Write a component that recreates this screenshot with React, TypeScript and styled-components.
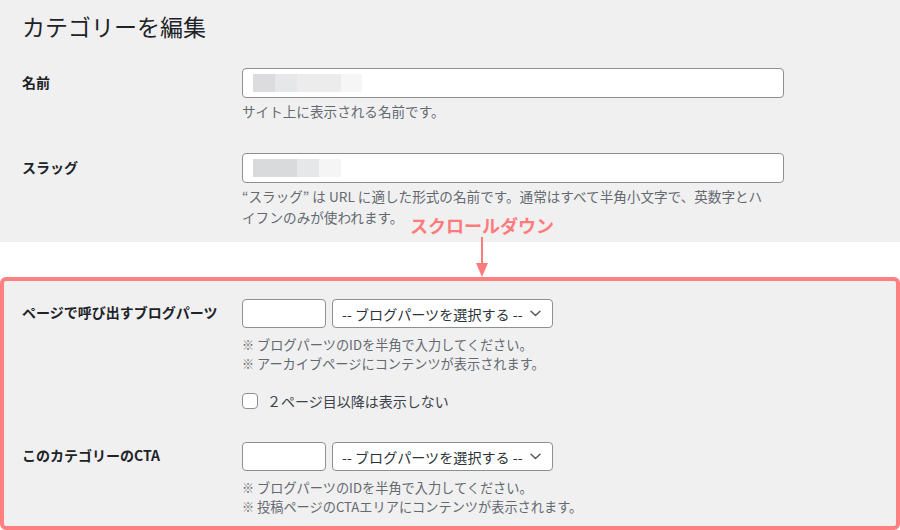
import React from "react";
import styled, { createGlobalStyle } from "styled-components";

const GlobalStyle = createGlobalStyle`
  html, body { margin: 0; padding: 0; background: #ffffff; }
  body {
    font-family: "Noto Sans CJK JP", "Noto Sans", sans-serif;
    color: #1d2327;
    -webkit-font-smoothing: antialiased;
  }
  * { box-sizing: border-box; }
`;

const Page = styled.div`
  position: relative;
  width: 900px;
  height: 530px;
  overflow: hidden;
  background: #ffffff;
`;

const TopSection = styled.section`
  background: #f0f0f1;
  height: 242px;
  padding: 11px 0 0 22px;
`;

const Title = styled.h1`
  margin: 0 0 27px;
  font-size: 23px;
  font-weight: 400;
  line-height: 30px;
  color: #1d2327;
`;

const Row = styled.div<{ $gap?: number }>`
  display: flex;
  align-items: flex-start;
  margin-bottom: ${(p) => p.$gap ?? 0}px;
`;

const Label = styled.div<{ $top?: number }>`
  width: 220px;
  flex: none;
  padding-top: ${(p) => p.$top ?? 4}px;
  font-size: 14px;
  font-weight: 700;
  line-height: 20px;
  color: #1d2327;
`;

const Field = styled.div`
  display: flex;
  flex-direction: column;
`;

const TextInput = styled.div`
  width: 542px;
  height: 30px;
  border: 1px solid #8c8f94;
  border-radius: 4px;
  background: #ffffff;
  display: flex;
  align-items: center;
  padding-left: 10px;
`;

const Blur = styled.span<{ $w: number; $c: string }>`
  display: inline-block;
  width: ${(p) => p.$w}px;
  height: 18px;
  background: ${(p) => p.$c};
`;

const Description = styled.p`
  margin: 3px 0 0;
  width: 560px;
  font-size: 13.6px;
  line-height: 21px;
  color: #646970;
  white-space: nowrap;
`;

const Annotation = styled.div`
  position: absolute;
  left: 410px;
  top: 214px;
  display: flex;
  flex-direction: column;
  align-items: center;
  width: 144px;
`;

const AnnotationText = styled.span`
  font-size: 18px;
  font-weight: 700;
  line-height: 23px;
  color: #ff7b7b;
  white-space: nowrap;
`;

const ArrowBox = styled.svg`
  display: block;
  margin-left: -1px;
`;

const WhiteGap = styled.div`
  height: 35px;
`;

const Highlight = styled.section`
  height: 253px;
  border: 4px solid #ff8080;
  border-radius: 6px;
  background: #f0f0f1;
  padding: 18px 0 0 18px;
`;

const Controls = styled.div`
  display: flex;
  gap: 6px;
  align-items: flex-start;
`;

const SmallInput = styled.div`
  width: 84px;
  height: 29px;
  border: 1px solid #8c8f94;
  border-radius: 4px;
  background: #ffffff;
`;

const Select = styled.div`
  width: 221px;
  height: 29px;
  border: 1px solid #8c8f94;
  border-radius: 4px;
  background: #ffffff;
  display: flex;
  align-items: center;
  justify-content: space-between;
  padding: 0 11px 0 9px;
  font-size: 14.1px;
  color: #2c3338;
  white-space: nowrap;
`;

const Notes = styled.div<{ $top: number }>`
  margin-top: ${(p) => p.$top}px;
  font-size: 13.2px;
  line-height: 19px;
  color: #646970;
`;

const Note = styled.div`
  white-space: nowrap;
`;

const Mark = styled.span`
  font-size: 12px;
  margin-right: 3px;
`;

const CheckRow = styled.label`
  display: flex;
  align-items: center;
  gap: 9px;
  margin-top: 19px;
  font-size: 14px;
  line-height: 18px;
  color: #3c434a;
`;

const CheckBox = styled.span`
  width: 16px;
  height: 16px;
  border: 1px solid #8c8f94;
  border-radius: 4px;
  background: #ffffff;
  flex: none;
`;

const Chevron = () => (
  <svg width="11" height="7" viewBox="0 0 11 7" fill="none">
    <path d="M1 1.2 L5.5 5.6 L10 1.2" stroke="#50575e" strokeWidth="1.4" strokeLinecap="round" strokeLinejoin="round" />
  </svg>
);

const PartsPicker = () => (
  <Controls>
    <SmallInput />
    <Select>
      <span>-- ブログパーツを選択する --</span>
      <Chevron />
    </Select>
  </Controls>
);

export default function App() {
  return (
    <Page>
      <GlobalStyle />
      <TopSection>
        <Title>カテゴリーを編集</Title>
        <Row $gap={31}>
          <Label>名前</Label>
          <Field>
            <TextInput>
              <Blur $w={22} $c="#dcdcde" />
              <Blur $w={22} $c="#e6e7e8" />
              <Blur $w={44} $c="#ececec" />
              <Blur $w={21} $c="#f6f6f6" />
            </TextInput>
            <Description>サイト上に表示される名前です。</Description>
          </Field>
        </Row>
        <Row>
          <Label>スラッグ</Label>
          <Field>
            <TextInput>
              <Blur $w={44} $c="#d9dadc" />
              <Blur $w={22} $c="#e6e7e8" />
              <Blur $w={22} $c="#f5f5f5" />
            </TextInput>
            <Description>
              “スラッグ” は URL に適した形式の名前です。通常はすべて半角小文字で、英数字とハ
              <br />
              イフンのみが使われます。
            </Description>
          </Field>
        </Row>
      </TopSection>
      <WhiteGap />
      <Highlight>
        <Row $gap={32}>
          <Label $top={3}>ページで呼び出すブログパーツ</Label>
          <Field>
            <PartsPicker />
            <Notes $top={7}>
              <Note><Mark>※</Mark>ブログパーツのIDを半角で入力してください。</Note>
              <Note><Mark>※</Mark>アーカイブページにコンテンツが表示されます。</Note>
            </Notes>
            <CheckRow>
              <CheckBox />
              <span>２ページ目以降は表示しない</span>
            </CheckRow>
          </Field>
        </Row>
        <Row>
          <Label $top={3}>このカテゴリーのCTA</Label>
          <Field>
            <PartsPicker />
            <Notes $top={7}>
              <Note><Mark>※</Mark>ブログパーツのIDを半角で入力してください。</Note>
              <Note><Mark>※</Mark>投稿ページのCTAエリアにコンテンツが表示されます。</Note>
            </Notes>
          </Field>
        </Row>
      </Highlight>
      <Annotation>
        <AnnotationText>スクロールダウン</AnnotationText>
        <ArrowBox width="14" height="40" viewBox="0 0 14 40">
          <line x1="7" y1="0" x2="7" y2="28" stroke="#ff7b7b" strokeWidth="2" />
          <path d="M1 26 L13 26 L7 40 Z" fill="#ff7b7b" />
        </ArrowBox>
      </Annotation>
    </Page>
  );
}
